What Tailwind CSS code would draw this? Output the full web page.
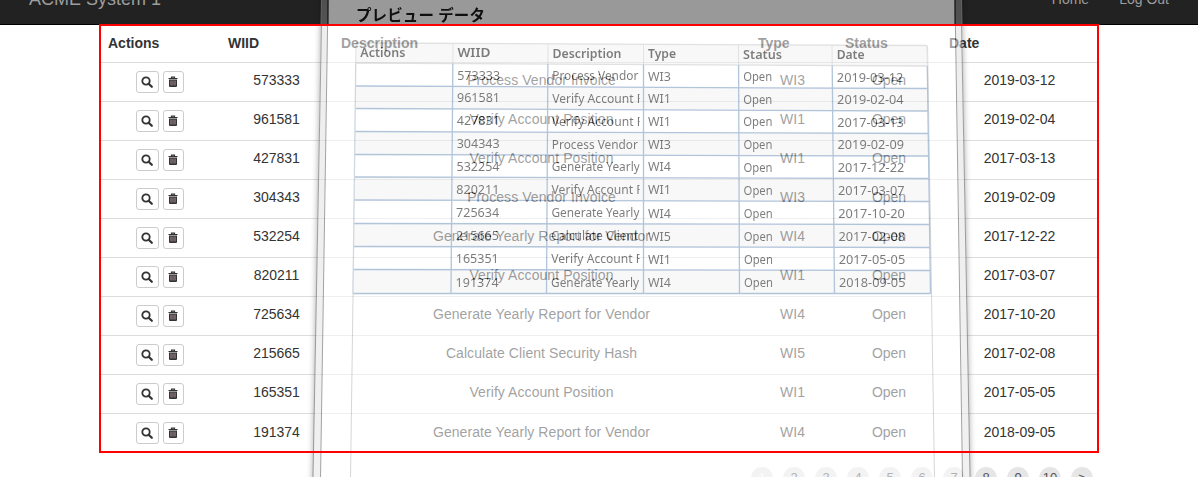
<!DOCTYPE html>
<html lang="en">
<head>
<meta charset="utf-8">
<title>ACME System 1</title>
<script src="https://cdn.jsdelivr.net/npm/@tailwindcss/browser@4"></script>
</head>
<body class="relative h-[477px] w-[1198px] overflow-hidden bg-white font-['Liberation_Sans',sans-serif] text-sm text-[#333]">
<header class="flex h-[25px] justify-between border-b border-black bg-[#222] pl-[29px] pr-[29px] text-[#9d9d9d]">
  <span class="-mt-3 text-lg leading-[22px]">ACME System 1</span>
  <nav class="-mt-[11px] flex gap-[30px] leading-5"><span>Home</span><span>Log Out</span></nav>
</header>
<main class="ml-[100px] w-[998px]">
  <table class="w-full table-fixed border-collapse">
    <colgroup><col class="w-[120px]"><col class="w-[113px]"><col class="w-[417px]"><col class="w-[87px]"><col class="w-[104px]"><col class="w-[157px]"></colgroup>
    <thead><tr class="h-[37px] text-left align-top leading-5"><th class="px-2 pt-2">Actions</th><th class="px-2 pt-2">WIID</th><th class="px-2 pt-2">Description</th><th class="px-2 pt-2">Type</th><th class="px-2 pt-2">Status</th><th class="px-2 pt-2">Date</th></tr></thead>
    <tbody id="items"></tbody>
  </table>
  <ul id="pages" class="mt-[15px] flex justify-end gap-[10px] pr-[5px] text-[13px]"></ul>
</main>
<svg id="preview" class="absolute inset-0" width="1198" height="477" font-family="'Noto Sans','Noto Sans CJK JP',sans-serif">
  <defs>
    <filter id="soft" x="-5%" y="-5%" width="110%" height="110%"><feGaussianBlur stdDeviation="3"/></filter>
    <clipPath id="outside"><path d="M0 0H321.5L313 478H0Z M961.5 0H1198V478H970Z"/></clipPath>
    <clipPath id="desc"><path d="M540 60H639.5V300H540Z"/></clipPath>
    <linearGradient id="rim" gradientUnits="userSpaceOnUse" x1="0" y1="0" x2="0" y2="477"><stop offset="0" stop-color="#777"/><stop offset=".052" stop-color="#7c7c7c"/><stop offset=".0525" stop-color="#e0e0e0"/><stop offset="1" stop-color="#e6e6e6"/></linearGradient>
  </defs>
  <g clip-path="url(#outside)"><path d="M321.5-10 L312.5 490 H970.5 L961.5-10Z" fill="#000" opacity=".34" filter="url(#soft)"/></g>
  <g opacity=".54">
    <path d="M328-1 H955 L962 478 H320Z" fill="#fff"/>
    <path d="M321.5-1 H328 L320.5 478 H313Z M955-1 H961.5 L970 478 H962.5Z" fill="url(#rim)"/>
    <path d="M321.500 24 L313 478 M961.500 24 L970 478" stroke="#555" fill="none"/>
    <path d="M321.500-1 L321 24 M961.500-1 L962 24" stroke="#a0a0a0" fill="none"/>
    <path d="M328-1 L320.500 478 M955-1 L962.500 478" stroke="#555" fill="none"/>
    <path d="M328-1 V24 M955-1V24" stroke="#000" fill="none"/>
    <path d="M356.500 44 L350.500 478 M927.500 46 L934.500 478" stroke="#b4b4b4" fill="none"/>
    <g id="grid"></g>
    <text x="356" y="21" font-size="15.500" font-weight="700" textLength="129">プレビュー データ</text>
  </g>
</svg>
<div class="absolute left-[99px] top-6 h-[429px] w-[1000px] border-2 border-[#f00]"></div>
<script>
const rows = [
  ['573333','Process Vendor Invoice','WI3','2019-03-12'],
  ['961581','Verify Account Position','WI1','2019-02-04'],
  ['427831','Verify Account Position','WI1','2017-03-13'],
  ['304343','Process Vendor Invoice','WI3','2019-02-09'],
  ['532254','Generate Yearly Report for Vendor','WI4','2017-12-22'],
  ['820211','Verify Account Position','WI1','2017-03-07'],
  ['725634','Generate Yearly Report for Vendor','WI4','2017-10-20'],
  ['215665','Calculate Client Security Hash','WI5','2017-02-08'],
  ['165351','Verify Account Position','WI1','2017-05-05'],
  ['191374','Generate Yearly Report for Vendor','WI4','2018-09-05']
];
const search = '<svg class="-ml-px" width="12" height="12" viewBox="0 0 12 12" fill="none" stroke="#333" stroke-width="1.8"><circle cx="5" cy="5" r="3.7"/><path d="M7.700 7.700 L10.800 10.800" stroke-width="2.200" stroke-linecap="round"/></svg>';
const trash = '<svg class="-ml-px" width="10" height="12" viewBox="0 0 10 12"><path d="M.5 2.500h9M3.500 2V1.200h3v1" stroke="#333" stroke-width="1.200" fill="none"/><path d="M1 3.500h8v6.500q0 1-1 1H2q-1 0-1-1z" fill="#333"/><path d="M3 4.500v5M7 4.500v5" stroke="#c99a8a" stroke-width=".9"/><path d="M5 4.500v5" stroke="#8a9ac0" stroke-width=".9"/></svg>';
document.getElementById('items').innerHTML = rows.map((r, i) => {
  const p = i === 9 ? 'pt-2' : 'pt-[7px]';
  return `<tr class="h-[39px] border-t border-[#ddd] align-top text-center leading-5">
<td class="pt-2"><div class="flex justify-center gap-1"><span class="flex h-[22px] w-[23px] items-center justify-center rounded-[3px] border border-[#ccc]">${search}</span><span class="flex h-[22px] w-[21px] items-center justify-center rounded-[3px] border border-[#ccc]">${trash}</span></div></td>
<td class="${p}">${r[0]}</td><td class="tracking-[0.07px] ${p}">${r[1]}</td><td class="${p} pr-[2px]">${r[2]}</td><td class="${p}">Open</td><td class="${p}">${r[3]}</td></tr>`;
}).join('');
document.getElementById('pages').innerHTML = ['1','2','3','4','5','6','7','8','9','10','>'].map((p, i) => `<li class="flex size-[22px] items-center justify-center rounded-full bg-[#e6e6e6] ${i ? 'text-[#555]' : 'text-white'}">${p}</li>`).join('');

// Preview grid: interpolated between its slightly skewed corners.
const top6 = [356,453,548,643.5,738.5,832,927], bot6 = [353,451,546.5,643.5,739.5,834.5,930.5];
const L = [43,63,86,108.5,131.5,154.5,177,200,223.5,246.5,269.5,293.5];
const R = [45.5,66,88.5,111,133.5,156,178.5,201.5,224.5,247.5,270.5,293.5];
const X = (c, y) => top6[c] + (bot6[c] - top6[c]) * (y - 44) / 249.5;
const Y = (i, c) => L[i] + (R[i] - L[i]) * c / 6;
let out = '';
for (let i = 0; i < 11; i++) {
  const a = `${X(0,L[i])} ${L[i]}`, b = `${X(6,R[i])} ${R[i]}`, c = `${X(6,R[i+1])} ${R[i+1]}`, d = `${X(0,L[i+1])} ${L[i+1]}`;
  out += `<path d="M${a}L${b}L${c}L${d}Z" fill="${i === 0 || (i % 2 === 0) ? '#f3f3f3' : '#fff'}"/>`;
}
for (let i = 0; i < 12; i++) out += `<path d="M${X(0,L[i])} ${L[i]}L${X(6,R[i])} ${R[i]}" stroke="${i < 2 ? '#c8c8c8' : '#7294bc'}" stroke-width="1.300"/>`;
for (let c = 0; c < 7; c++) {
  out += `<path d="M${X(c,44)} ${Y(0,c)}L${X(c,64)} ${Y(1,c)}" stroke="#ccc"/>`;
  out += `<path d="M${X(c,64)} ${Y(1,c)}L${X(c,293.5)} 293.5" stroke="${c ? '#7294bc' : '#a9b9cc'}" stroke-width="1.300"/>`;
}
const put = (c, i, s, w, bold) => {
  const y = Y(i + 1, c) - 6.5;
  out += `<text x="${X(c, y) + 4.5}" y="${y}" font-size="12" fill="#0c0c0c" textLength="${w}" lengthAdjust="spacingAndGlyphs"${bold ? ' font-weight="600"' : ''}${c === 2 && !bold ? ' clip-path="url(#desc)"' : ''}>${s}</text>`;
};
[['Actions',45],['WIID',33],['Description',69],['Type',28],['Status',39],['Date',28]].forEach((h, c) => put(c, 0, h[0], h[1], true));
const cut = { P: ['Process Vendor', 86], V: ['Verify Account P', 92], G: ['Generate Yearly', 88], C: ['Calculate Client', 87] };
rows.forEach((r, n) => {
  const d = cut[r[1][0]];
  put(1, n + 1, r[0], 43); put(2, n + 1, d[0], d[1]); put(3, n + 1, r[2], 23); put(4, n + 1, 'Open', 29); put(5, n + 1, r[3], 66.5);
});
document.getElementById('grid').innerHTML = out;
</script>
</body>
</html>
